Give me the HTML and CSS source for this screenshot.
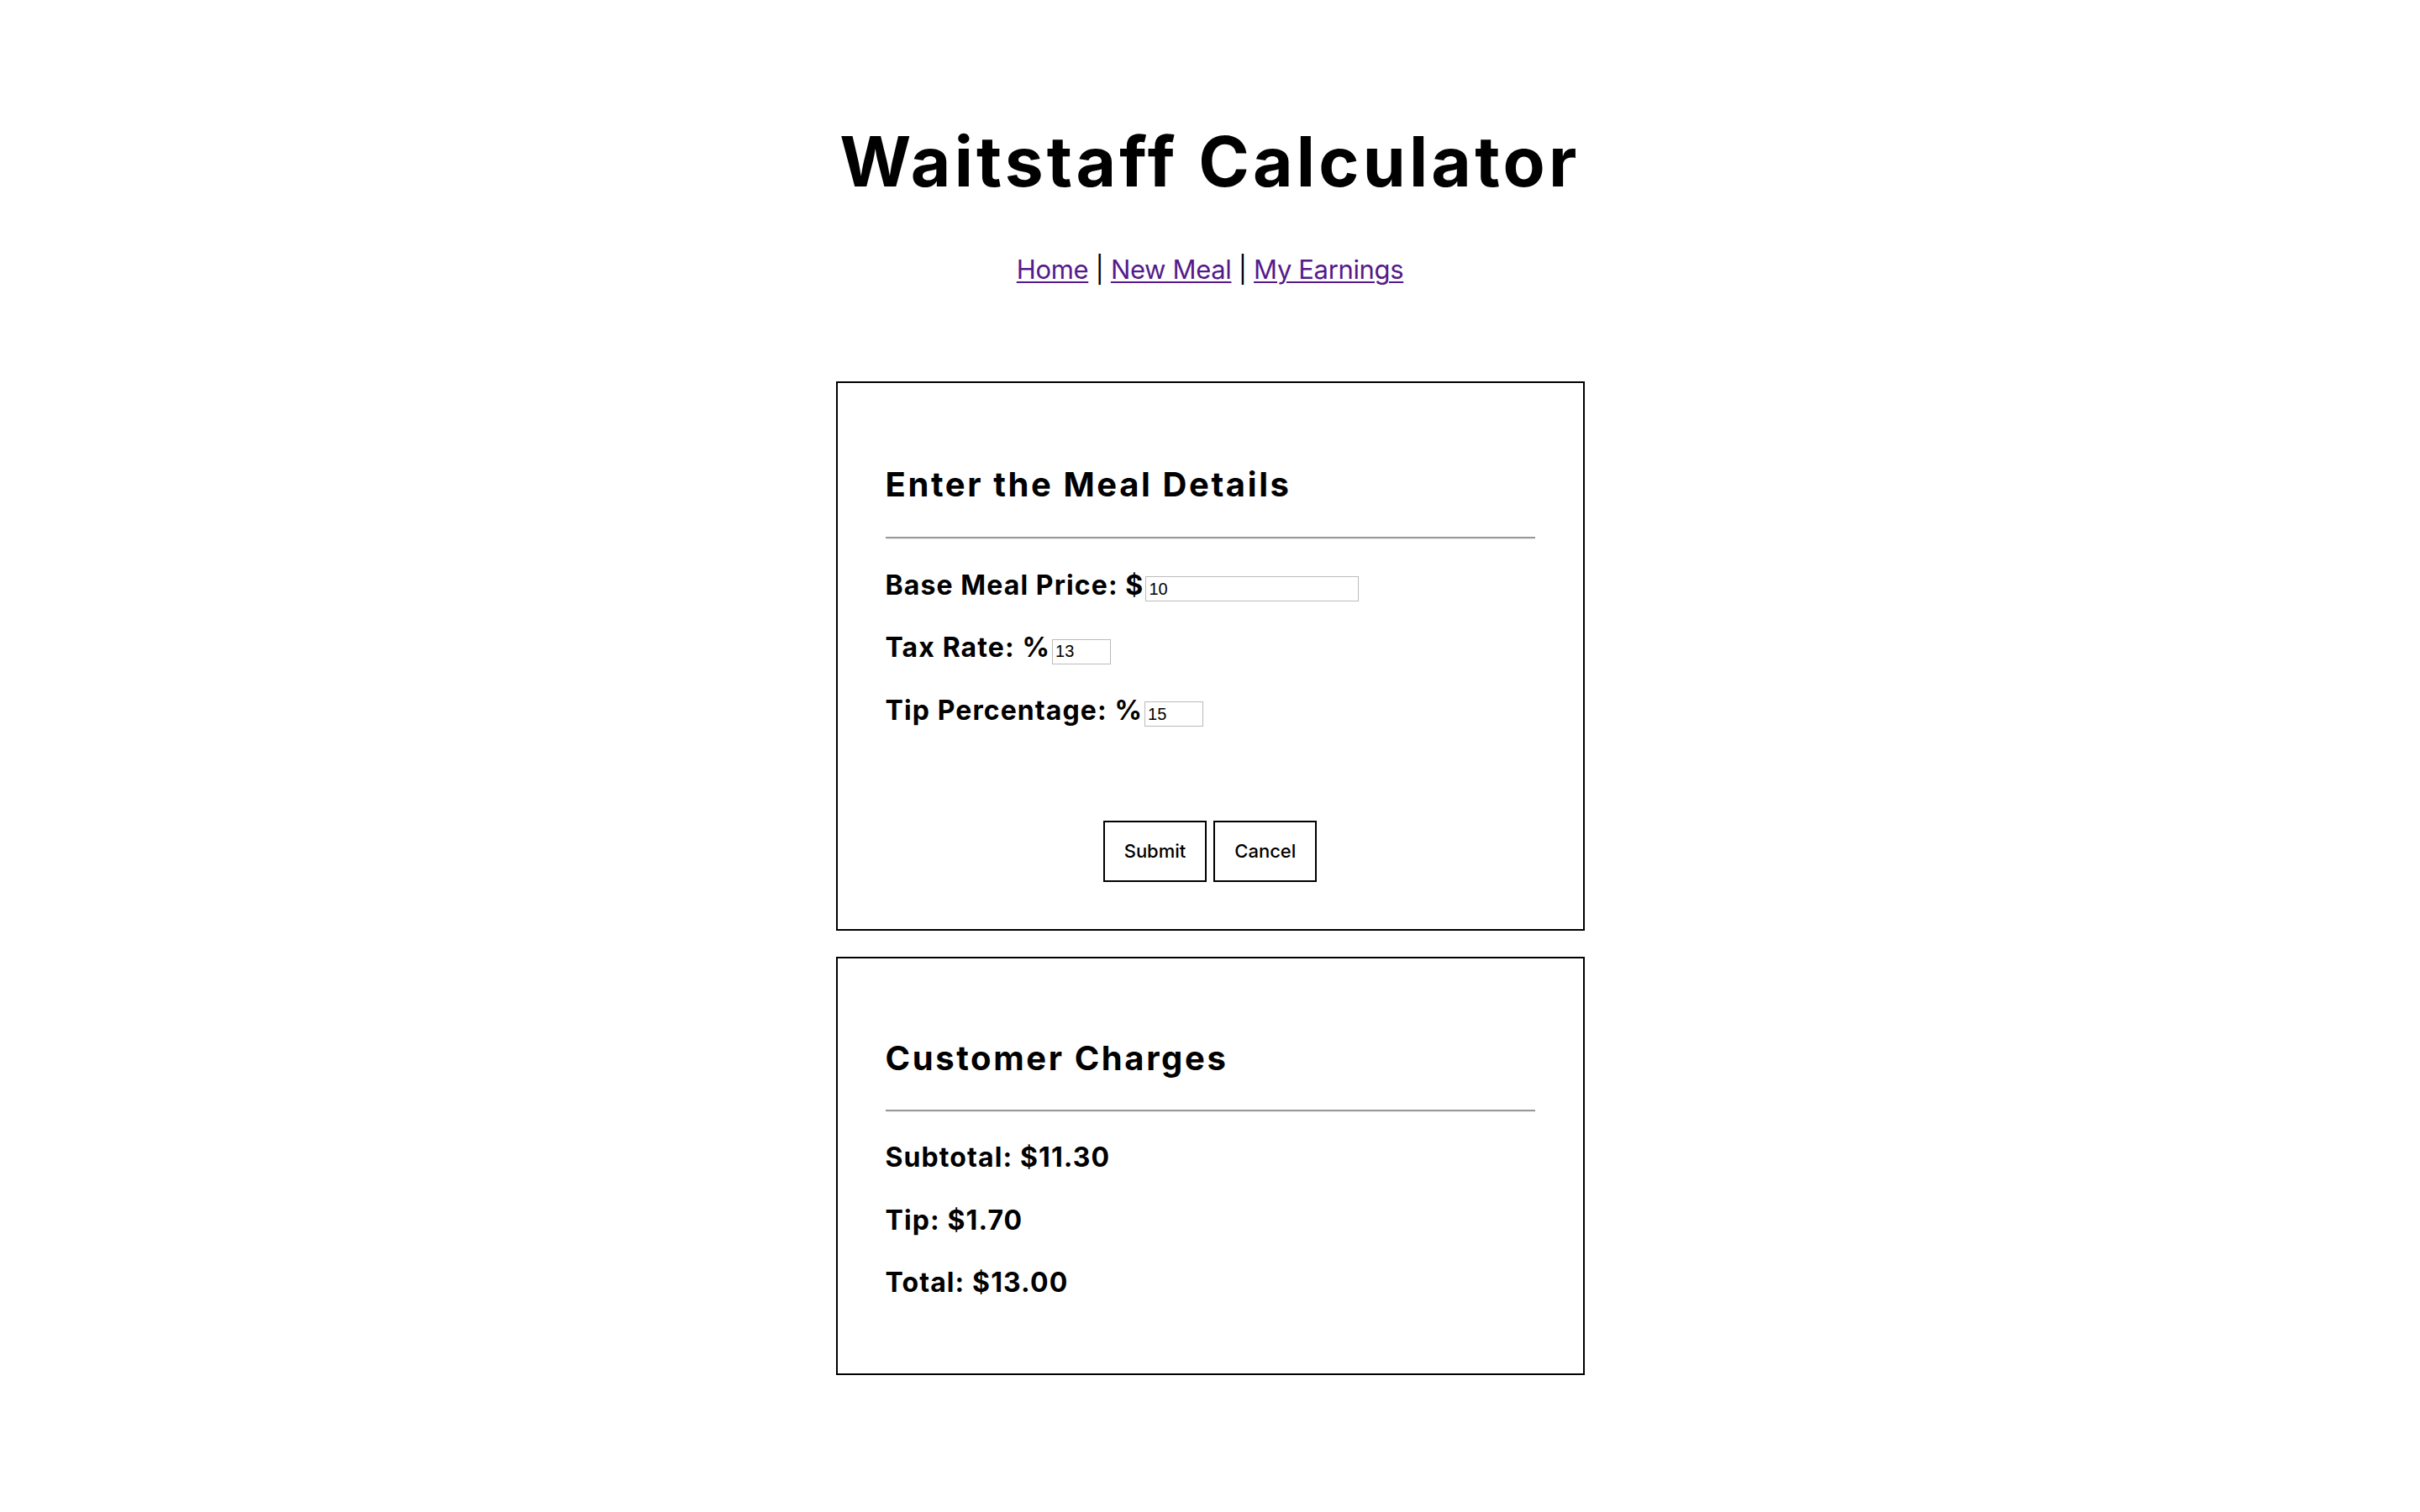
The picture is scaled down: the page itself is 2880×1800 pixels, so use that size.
FILE: index.html
```html
<!DOCTYPE html>
<html lang="en">
<head>
<meta charset="utf-8">
<title>Waitstaff Calculator</title>
<link rel="stylesheet" href="styles.css">
</head>
<body>
<header class="masthead">
  <h1 class="title">Waitstaff Calculator</h1>
  <nav class="nav"><a href="#">Home</a> | <a href="#">New Meal</a> | <a href="#">My Earnings</a></nav>
</header>
<main class="main">
  <section class="card card-form">
    <h2 class="card-title">Enter the Meal Details</h2>
    <hr class="rule">
    <div class="row"><label class="label" for="price">Base Meal Price: $</label><input class="field field-wide" id="price" type="text" value="10"></div>
    <div class="row"><label class="label" for="tax">Tax Rate: %</label><input class="field field-short" id="tax" type="text" value="13"></div>
    <div class="row"><label class="label" for="tip">Tip Percentage: %</label><input class="field field-short" id="tip" type="text" value="15"></div>
    <div class="actions">
      <button class="btn btn-submit" type="button">Submit</button>
      <button class="btn btn-cancel" type="button">Cancel</button>
    </div>
  </section>
  <section class="card card-results">
    <h2 class="card-title">Customer Charges</h2>
    <hr class="rule">
    <p class="row label">Subtotal: $11.30</p>
    <p class="row label">Tip: $1.70</p>
    <p class="row label">Total: $13.00</p>
  </section>
</main>
</body>
</html>
```
FILE: styles.css
```css
* { box-sizing: border-box; }
html, body { margin: 0; padding: 0; background: #fff; color: #000; }
body { font-family: "Inter", "Liberation Sans", sans-serif; }

.masthead { text-align: center; padding-top: 143px; }
.title {
  margin: 0;
  font-size: 82px;
  line-height: 100px;
  font-weight: 700;
  letter-spacing: 4.2px;
}
.nav {
  margin-top: 58px;
  font-family: "Inter", "Liberation Sans", sans-serif;
  font-size: 31px;
  line-height: 40px;
  letter-spacing: -0.35px;
  color: #000;
}
.nav a { color: #551a8b; text-decoration: underline; text-underline-offset: 3px; text-decoration-thickness: 2px; }

.main { display: flex; flex-direction: column; align-items: center; gap: 31px; margin-top: 113px; padding-bottom: 100px; }
.card {
  width: 891px;
  border: 2px solid #000;
  padding: 97px 57px 56px 57px;
}
.card-results { padding-top: 95px; padding-bottom: 88px; }
.card-title {
  margin: 0;
  font-size: 40px;
  line-height: 48px;
  font-weight: 700;
  letter-spacing: 2.6px;
}
.rule {
  margin: 38px 0 0 0;
  border: 0;
  border-top: 2px solid #999;
  border-bottom: 1px solid #eee;
  height: 0;
}
.card-results .rule { margin-top: 37px; }
.row {
  display: flex;
  align-items: baseline;
  margin: 34.5px 0 0 0;
  height: 40px;
}
.label {
  font-size: 32px;
  line-height: 40px;
  font-weight: 700;
  letter-spacing: 1.1px;
}
.row .label { margin: 0; }
.field {
  font-family: "Liberation Sans", Arial, sans-serif;
  font-size: 20px;
  height: 30px;
  border: 1px solid #bbb;
  padding: 0 3px;
  margin-left: 2px;
  color: #000;
  background: #fff;
}
.field-wide { width: 254px; }
.field-short { width: 70px; }

.actions {
  display: flex;
  justify-content: center;
  gap: 8px;
  margin-top: 111px;
}
.btn {
  font-family: "Inter", "Liberation Sans", sans-serif;
  font-size: 22px;
  font-weight: 500;
  height: 73px;
  padding: 0 23px;
  border: 2px solid #000;
  background: #fff;
  color: #000;
}
```
